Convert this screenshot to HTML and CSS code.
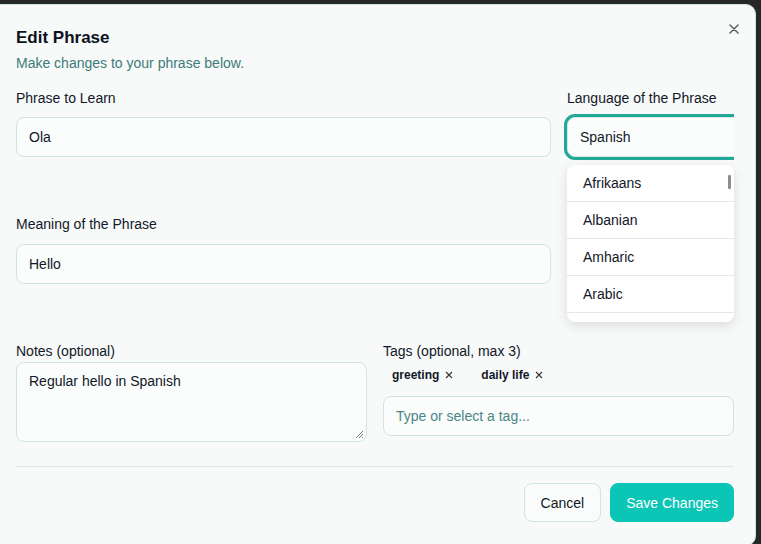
FILE: index.html
```html
<!DOCTYPE html>
<html lang="en">
<head>
<meta charset="utf-8">
<title>Edit Phrase</title>
<link rel="stylesheet" href="styles.css">
</head>
<body>
<div class="dialog">
  <button class="close" aria-label="Close">
    <svg width="10" height="10" viewBox="0 0 10 10"><path d="M1 1L9 9M9 1L1 9" stroke="#5b5f66" stroke-width="1.5" stroke-linecap="round"/></svg>
  </button>
  <h2 class="title">Edit Phrase</h2>
  <p class="subtitle">Make changes to your phrase below.</p>

  <div class="row row-main">
    <div class="field">
      <label class="label">Phrase to Learn</label>
      <div class="input">Ola</div>
    </div>
    <div class="field lang">
      <label class="label">Language of the Phrase</label>
      <div class="select-clip">
        <div class="select">Spanish</div>
      </div>
      <div class="dropdown">
        <ul class="options">
          <li>Afrikaans</li>
          <li>Albanian</li>
          <li>Amharic</li>
          <li>Arabic</li>
          <li class="blank"></li>
        </ul>
        <span class="thumb"></span>
      </div>
    </div>
  </div>

  <div class="row row-main row-meaning">
    <div class="field">
      <label class="label">Meaning of the Phrase</label>
      <div class="input input-meaning">Hello</div>
    </div>
    <div></div>
  </div>

  <div class="row row-half">
    <div class="field">
      <label class="label">Notes (optional)</label>
      <div class="textarea">Regular hello in Spanish
        <svg class="grip" width="10" height="10" viewBox="0 0 10 10"><path d="M9 2L2 9M9 5L5 9M9 8L8 9" stroke="#777" stroke-width="1"/></svg>
      </div>
    </div>
    <div class="field">
      <label class="label">Tags (optional, max 3)</label>
      <div class="chips">
        <span class="chip">greeting <svg width="8" height="8" viewBox="0 0 8 8"><path d="M1 1L7 7M7 1L1 7" stroke="#333" stroke-width="1.1"/></svg></span>
        <span class="chip">daily life <svg width="8" height="8" viewBox="0 0 8 8"><path d="M1 1L7 7M7 1L1 7" stroke="#333" stroke-width="1.1"/></svg></span>
      </div>
      <div class="input placeholder">Type or select a tag...</div>
    </div>
  </div>

  <div class="footer">
    <button class="btn btn-cancel">Cancel</button>
    <button class="btn btn-save">Save Changes</button>
  </div>
</div>
</body>
</html>
```

FILE: styles.css
```css
* { box-sizing: border-box; }
html, body { margin: 0; padding: 0; }
body {
  background: #272727;
  width: 761px;
  height: 544px;
  overflow: hidden;
  font-family: "Liberation Sans", Arial, sans-serif;
  color: #111827;
}
.dialog {
  position: relative;
  margin: 4px 0 0 -10px;
  width: 766px;
  height: 542px;
  background: #f8f9f9;
  border: 1px solid #cfe4e1;
  border-radius: 10px;
  padding: 21px 21px 0 25px;
}
.close {
  position: absolute;
  top: 14px;
  right: 11px;
  width: 20px;
  height: 20px;
  padding: 0;
  border: 0;
  background: transparent;
  display: flex;
  align-items: center;
  justify-content: center;
}
.title {
  margin: 0;
  font-size: 17px;
  line-height: 24px;
  font-weight: 700;
  color: #0b1220;
}
.subtitle {
  margin: 3px 0 0;
  font-size: 14px;
  line-height: 20px;
  color: #3c7c7a;
}
.row { display: grid; }
.row-main {
  grid-template-columns: 1fr 167px;
  column-gap: 16px;
  margin-top: 15px;
}
.row-meaning { margin-top: 54px; }
.row-half {
  grid-template-columns: 1fr 1fr;
  column-gap: 16px;
  margin-top: 57px;
}
.field { display: flex; flex-direction: column; position: relative; }
.label {
  font-size: 14px;
  line-height: 20px;
  color: #111827;
}
.input {
  margin-top: 9px;
  height: 40px;
  border: 1px solid #cfe5e3;
  border-radius: 8px;
  background: #fbfcfc;
  padding: 0 12px;
  display: flex;
  align-items: center;
  font-size: 14px;
  color: #111827;
}
.input-meaning { margin-top: 10px; }
.select-clip {
  margin: 6px 0 0 -4px;
  padding: 3px 0 3px 4px;
  overflow: hidden;
}
.select {
  width: 200px;
  height: 40px;
  border: 1px solid #d3ebe8;
  border-radius: 8px;
  background: #fbfcfc;
  box-shadow: 0 0 0 3px #22a898;
  padding: 0 12px;
  display: flex;
  align-items: center;
  font-size: 14px;
}
.dropdown {
  position: absolute;
  top: 77px;
  left: 0;
  width: 167px;
  height: 157px;
  background: #ffffff;
  border-radius: 8px;
  box-shadow: 0 4px 12px rgba(0, 0, 0, 0.12);
  overflow: hidden;
}
.options {
  list-style: none;
  margin: 0;
  padding: 0;
}
.options li {
  height: 37px;
  padding: 0 16px;
  display: flex;
  align-items: center;
  border-bottom: 1px solid #e4e6e8;
  font-size: 14px;
  color: #111827;
}
.options li.blank { border-bottom: 0; }
.thumb {
  position: absolute;
  top: 10px;
  right: 3px;
  width: 3px;
  height: 14px;
  background: #8e8e8e;
  border-radius: 1px;
}
.textarea {
  position: relative;
  margin-top: 1px;
  height: 80px;
  border: 1px solid #cfe5e3;
  border-radius: 8px;
  background: #fbfcfc;
  padding: 8px 12px;
  font-size: 14px;
  line-height: 20px;
}
.grip { position: absolute; right: 2px; bottom: 2px; }
.chips {
  display: flex;
  margin-top: 5px;
  height: 18px;
  align-items: center;
}
.chip {
  display: inline-flex;
  align-items: center;
  gap: 6px;
  padding: 0 0 0 9px;
  font-size: 12px;
  font-weight: 700;
  color: #111827;
}
.chip + .chip { margin-left: 19px; padding-left: 9px; }
.placeholder {
  margin-top: 12px;
  color: #4a8684;
}
.footer {
  margin-top: 24px;
  border-top: 1px solid #e2e6ea;
  padding-top: 16px;
  display: flex;
  justify-content: flex-end;
  gap: 9px;
}
.btn {
  height: 39px;
  padding: 0 16px;
  border-radius: 8px;
  font-family: "Liberation Sans", Arial, sans-serif;
  font-size: 14px;
}
.btn-cancel {
  border: 1px solid #cfe5e3;
  background: #fafcfc;
  color: #111827;
}
.btn-save {
  padding: 0 15px;
  border: 1px solid #0bc5b6;
  background: #0bc5b6;
  color: #ffffff;
}
```
